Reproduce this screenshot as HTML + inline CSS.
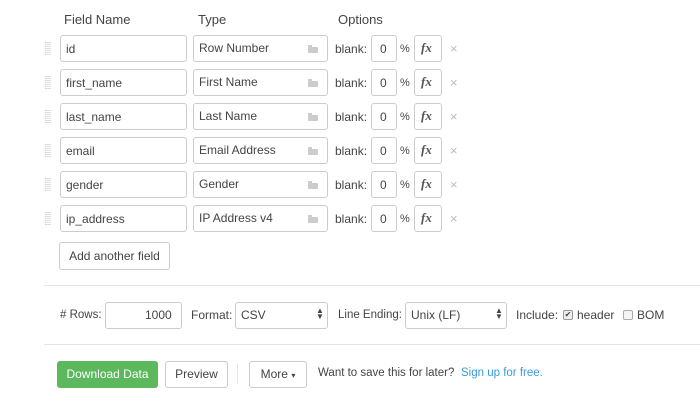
<!DOCTYPE html><html><head><style>
body{margin:0;width:700px;height:401px;background:#fff;font-family:"Liberation Sans",sans-serif;font-size:12px;color:#444;position:relative;overflow:hidden}
.a{position:absolute}
.box{position:absolute;border:1px solid #ccc;border-radius:3px;box-sizing:border-box;background:#fff}
.t{position:absolute;white-space:nowrap}
.grip{position:absolute;width:5px;height:13px;background:repeating-linear-gradient(#ddd 0 1px,#fff 1px 2px);border-left:1px dotted #ccc}
.btn{position:absolute;border:1px solid #ccc;border-radius:3px;box-sizing:border-box;background:#fff;text-align:center;font-size:12px}
</style></head><body>
<div class="t" style="left:64px;top:12px;font-size:13px">Field Name</div>
<div class="t" style="left:198px;top:12px;font-size:13px">Type</div>
<div class="t" style="left:338px;top:12px;font-size:13px">Options</div>
<div id="rows"></div>
<script>
var f=[["id","Row Number"],["first_name","First Name"],["last_name","Last Name"],["email","Email Address"],["gender","Gender"],["ip_address","IP Address v4"]];
var h="";f.forEach(function(r,i){var y=35+i*34;
h+='<div class="grip" style="left:45px;top:'+(y+7)+'px"></div>';
h+='<div class="box" style="left:60px;top:'+y+'px;width:127px;height:27px"></div><div class="t" style="left:66px;top:'+(y+7)+'px">'+r[0]+'</div>';
h+='<div class="box" style="left:193px;top:'+y+'px;width:135px;height:27px"></div><div class="t" style="left:199px;top:'+(y+6)+'px">'+r[1]+'</div>';
h+='<div class="a" style="left:308px;top:'+(y+10)+'px;width:4px;height:2px;background:#ccc"></div><div class="a" style="left:308px;top:'+(y+12)+'px;width:10px;height:6px;background:#ccc;border-radius:1px"></div>';
h+='<div class="t" style="left:335px;top:'+(y+7)+'px">blank:</div>';
h+='<div class="box" style="left:371px;top:'+y+'px;width:26px;height:27px"></div><div class="t" style="left:380px;top:'+(y+7)+'px">0</div>';
h+='<div class="t" style="left:400px;top:'+(y+8)+'px;font-size:11px">%</div>';
h+='<div class="box" style="left:414px;top:'+y+'px;width:28px;height:27px"></div><div class="t" style="left:421px;top:'+(y+5)+'px;font-family:Liberation Serif;font-style:italic;font-weight:bold;font-size:13px;color:#555">fx</div>';
h+='<div class="t" style="left:450px;top:'+(y+6)+'px;color:#bbb;font-size:13px">×</div>';});
document.getElementById("rows").innerHTML=h;
</script>
<div class="btn" style="left:59px;top:242px;width:111px;height:28px;line-height:26px">Add another field</div>
<div class="a" style="left:44px;top:285px;width:656px;height:1px;background:#e5e5e5"></div>
<div class="t" style="left:60px;top:308px;font-size:11.5px;line-height:14px">#&nbsp;Rows:</div>
<div class="box" style="left:105px;top:302px;width:77px;height:27px"></div><div class="t" style="left:145px;top:308px">1000</div>
<div class="t" style="left:191px;top:308px">Format:</div>
<div class="box" style="left:235px;top:302px;width:93px;height:27px"></div><div class="t" style="left:241px;top:308px">CSV</div><div class="t" style="left:316px;top:308px;font-size:8px;line-height:6px">▲<br>▼</div>
<div class="t" style="left:338px;top:308px;font-size:11.5px;line-height:14px">Line Ending:</div>
<div class="box" style="left:405px;top:302px;width:102px;height:27px"></div><div class="t" style="left:411px;top:308px">Unix (LF)</div><div class="t" style="left:495px;top:308px;font-size:8px;line-height:6px">▲<br>▼</div>
<div class="t" style="left:516px;top:308px">Include:</div>
<div class="a" style="left:563px;top:310px;width:8px;height:8px;border:1px solid #999;border-radius:2px;background:#eee;font-size:8px;line-height:8px;text-align:center">✔</div>
<div class="t" style="left:577px;top:308px">header</div>
<div class="a" style="left:623px;top:310px;width:8px;height:8px;border:1px solid #aaa;border-radius:2px;background:#f4f4f4"></div>
<div class="t" style="left:637px;top:308px">BOM</div>
<div class="a" style="left:44px;top:344px;width:656px;height:1px;background:#e5e5e5"></div>
<div class="a" style="left:57px;top:361px;width:101px;height:27px;background:#5cb85c;border-radius:3px;color:#fff;text-align:center;line-height:27px">Download Data</div>
<div class="btn" style="left:165px;top:361px;width:63px;height:27px;line-height:25px">Preview</div>
<div class="a" style="left:237px;top:364px;width:1px;height:20px;background:#e5e5e5"></div>
<div class="btn" style="left:249px;top:361px;width:58px;height:27px;line-height:25px">More <span style="font-size:8px">▾</span></div>
<div class="t" style="left:318px;top:366px;font-size:11.5px;line-height:14px">Want to save this for later?</div>
<div class="t" style="left:461px;top:366px;color:#3a9bd9;font-size:11.5px;line-height:14px">Sign up for free.</div>
</body></html>
